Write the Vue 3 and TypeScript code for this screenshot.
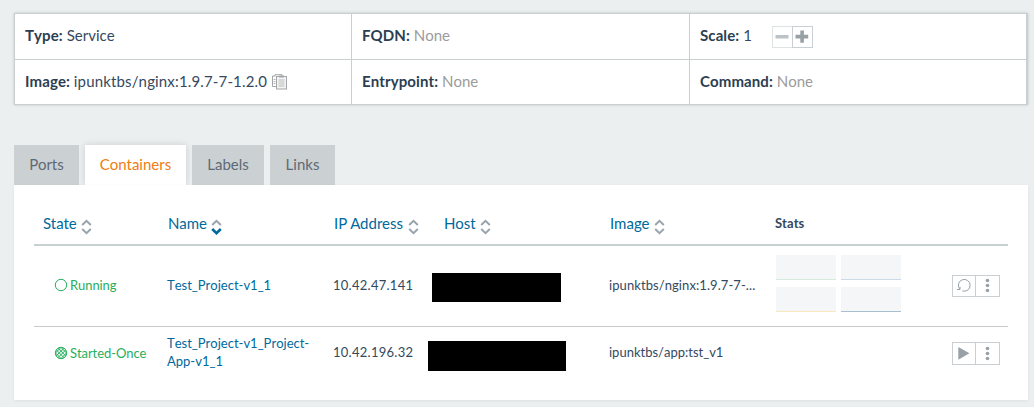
<script setup lang="ts">
interface Fact {
  label: string
  value: string
  muted?: boolean
  kind?: 'copy' | 'scale'
}

interface Column {
  key: string
  label: string
  sort?: 'none' | 'desc'
}

interface Row {
  state: string
  icon: 'running' | 'once'
  name: string
  ip: string
  image: string
  stats: string[]
}

const facts: Fact[] = [
  { label: 'Type:', value: 'Service' },
  { label: 'FQDN:', value: 'None', muted: true },
  { label: 'Scale:', value: '1', kind: 'scale' },
  { label: 'Image:', value: 'ipunktbs/nginx:1.9.7-7-1.2.0', kind: 'copy' },
  { label: 'Entrypoint:', value: 'None', muted: true },
  { label: 'Command:', value: 'None', muted: true },
]

const tabs = ['Ports', 'Containers', 'Labels', 'Links']
const activeTab = 'Containers'

const columns: Column[] = [
  { key: 'state', label: 'State', sort: 'none' },
  { key: 'name', label: 'Name', sort: 'desc' },
  { key: 'ip', label: 'IP Address', sort: 'none' },
  { key: 'host', label: 'Host', sort: 'none' },
  { key: 'image', label: 'Image', sort: 'none' },
  { key: 'stats', label: 'Stats' },
]

const rows: Row[] = [
  {
    state: 'Running',
    icon: 'running',
    name: 'Test_Project-v1_1',
    ip: '10.42.47.141',
    image: 'ipunktbs/nginx:1.9.7-7-...',
    stats: ['green', 'blue', 'yellow', 'navy'],
  },
  {
    state: 'Started-Once',
    icon: 'once',
    name: 'Test_Project-v1_Project-App-v1_1',
    ip: '10.42.196.32',
    image: 'ipunktbs/app:tst_v1',
    stats: [],
  },
]
</script>

<template>
  <main class="page">
    <section class="facts">
      <div v-for="f in facts" :key="f.label" class="fact">
        <span class="text"><b>{{ f.label }}</b> <span :class="[f.kind, { muted: f.muted }]">{{ f.value }}</span></span>
        <svg v-if="f.kind === 'copy'" class="clipboard" width="16" height="16" viewBox="0 0 16 16" fill="none" stroke="#a3a5a8">
          <path d="M4 12.500H.5v-10.500H3M3 2.500V.7h7v1.300" />
          <path d="M1.500 5.500h2M1.500 7.500h2M1.500 9.500h2" stroke-width=".8" />
          <rect x="4.500" y="2.500" width="10" height="12.500" fill="#f4f4f4" />
          <path d="M7 2.500h5" stroke-width="2" />
          <path d="M6.500 6h6M6.500 8h6M6.500 10h6M6.500 12h6" stroke-width=".7" />
        </svg>
        <span v-if="f.kind === 'scale'" class="stepper">
          <button class="minus" aria-label="Decrease"><svg width="14" height="14"><path d="M.5 5h13v3.500h-13z" /></svg></button>
          <button class="plus" aria-label="Increase"><svg width="14" height="14"><path d="M5.300 .5h3.600v4.300h4.300v3.600H8.900v4.300H5.300V8.400H.5V4.800h4.800z" /></svg></button>
        </span>
      </div>
    </section>

    <nav class="tabs">
      <a v-for="t in tabs" :key="t" class="tab" :class="[t.toLowerCase(), { active: t === activeTab }]">{{ t }}</a>
    </nav>

    <section class="panel">
      <div class="grid head">
        <div v-for="c in columns" :key="c.key" class="th" :class="c.key">
          <span>{{ c.label }}</span>
          <svg v-if="c.sort" class="sort" :class="c.sort" width="11" height="16" viewBox="0 0 11 16">
            <path d="M1.200 6 5.500 1.800 9.800 6" />
            <path class="down" d="M1.200 10 5.500 14.200 9.800 10" />
          </svg>
        </div>
      </div>

      <div v-for="r in rows" :key="r.name" class="grid row" :class="r.icon">
        <div class="status">
          <svg width="14" height="14" viewBox="0 0 14 14">
            <defs>
              <pattern id="mesh" width="2.600" height="2.600" patternUnits="userSpaceOnUse" patternTransform="rotate(45 7 7)">
                <path d="M0 .5H2.600M.5 0V2.600" stroke="#27ae60" stroke-width=".8" />
              </pattern>
            </defs>
            <circle cx="7" cy="7" r="5.700" :fill="r.icon === 'once' ? 'url(#mesh)' : 'none'" stroke="#27ae60" />
          </svg>
          <span>{{ r.state }}</span>
        </div>
        <a class="link">{{ r.name }}</a>
        <div class="address">{{ r.ip }}</div>
        <div class="host"><span class="mask"></span></div>
        <div class="source">{{ r.image }}</div>
        <div class="charts">
          <span v-for="s in r.stats" :key="s" class="chart" :class="s"></span>
        </div>
        <div class="actions">
          <button aria-label="Primary action">
            <svg v-if="r.icon === 'running'" width="16" height="16" viewBox="0 0 16 16" fill="none" stroke="#98a1a7">
              <path d="M3.800 11.200A5.900 5.900 0 1 1 6.300 12.900M1 11.500h3V8.700" />
            </svg>
            <svg v-else width="16" height="16" viewBox="0 0 16 16"><path d="M2.300 1 13.400 7.300 2.300 13.800z" fill="#98a1a7" /></svg>
          </button>
          <button aria-label="More">
            <svg width="16" height="16" viewBox="0 0 16 16" fill="#98a1a7">
              <circle cx="7.500" cy="2.500" r="1.800" /><circle cx="7.500" cy="7.500" r="1.800" /><circle cx="7.500" cy="12.500" r="1.800" />
            </svg>
          </button>
        </div>
      </div>
    </section>
  </main>
</template>

<style>
body {
  margin: 0;
  background: #ebeff0;
}
</style>

<style scoped>
* {
  box-sizing: border-box;
}
.page {
  height: 407px;
  overflow: hidden;
  padding: 13px 6px 0 14px;
  background: #ebeff0;
  color: #34495e;
  font: 15px/20px Lato, "Liberation Sans", sans-serif;
}
svg {
  display: block;
  flex: none;
}
b {
  font-weight: 700;
  letter-spacing: 0.1px;
  color: #2c3e50;
}
.facts {
  display: grid;
  grid-template-columns: 336px 337px 336px;
  grid-template-rows: 45px 44px;
  gap: 1px;
  width: 1014px;
  height: 92px;
  padding: 1px 2px 1px 1px;
  background: #c9cfd1;
  box-shadow: 0 0 3px rgba(0, 0, 0, 0.16);
  font-kerning: none;
}
.fact {
  display: flex;
  align-items: center;
  padding-left: 10px;
  background: #fff;
}
.text {
  margin-top: -3px;
}
.muted {
  color: #9b9b9b;
}
.copy {
  letter-spacing: 0.15px;
}
.clipboard {
  margin-left: 5px;
}
.stepper {
  display: flex;
  margin-left: 20px;
}
button {
  display: flex;
  align-items: center;
  justify-content: center;
  margin: 0;
  padding: 0;
  border: 1px solid #c9cfd2;
  background: #fff;
}
.stepper button {
  width: 21px;
  height: 22px;
}
.stepper .minus {
  border-color: #dfe3e4;
  border-right: 0;
  width: 20px;
}
.minus path {
  fill: #bcc2c6;
}
.plus path {
  fill: #98a1a5;
}
.tabs {
  display: flex;
  gap: 6px;
  height: 40px;
  margin-top: 40px;
}
.tab {
  display: flex;
  align-items: center;
  justify-content: center;
  padding-bottom: 2px;
  background: #cbd0d3;
  color: #5d6a73;
}
.ports,
.links {
  width: 65px;
}
.containers {
  width: 101px;
}
.labels {
  width: 72px;
}
.tab.active {
  background: #fff;
  color: #ee7d12;
  box-shadow: 0 0 7px rgba(0, 0, 0, 0.14);
}
.panel {
  position: relative;
  width: 1014px;
  height: 215px;
  padding: 19px 20px 0;
  background: #fff;
  box-shadow: 0 1px 3px rgba(0, 0, 0, 0.06);
}
.grid {
  display: grid;
  grid-template-columns: 133px 166px 95px 181px 166px 177px 1fr;
}
.head {
  height: 42px;
  border-bottom: 2px solid #c9d0d1;
}
.th {
  display: flex;
  align-items: flex-start;
  padding: 9px 0 0 1px;
  color: #00699c;
}
.th.state {
  padding-left: 9px;
}
.th.host {
  padding-left: 16px;
}
.th.stats {
  padding-left: 0;
  color: #34495e;
  font-weight: 700;
  font-size: 13px;
  letter-spacing: 0.15px;
}
.sort {
  margin: 6px 0 0 4px;
  fill: none;
  stroke: #98a3ac;
  stroke-width: 2;
}
.ip .sort,
.image .sort {
  margin-left: 5px;
}
.sort.desc .down {
  stroke: #00699c;
  stroke-width: 2.6;
}
.row {
  font-size: 13px;
  line-height: 18px;
  align-items: start;
  font-kerning: none;
}
.running {
  height: 81px;
  border-bottom: 1px solid #c9c9c9;
}
.row > div,
.link {
  margin-top: 30px;
}
.row.once > div {
  margin-top: 16px;
}
.status {
  display: flex;
  align-items: center;
  gap: 2px;
  padding-left: 20px;
  color: #27ae60;
  letter-spacing: -0.08px;
}
.row.once > .status {
  margin-top: 17px;
}
.link {
  color: #00699c;
}
.row.once > .link {
  margin-top: 7px;
}
.address {
  letter-spacing: 0.27px;
}
.running .source {
  letter-spacing: 0.08px;
}
.row .host {
  margin-top: 27px;
  padding-left: 4px;
}
.row.once .host {
  margin-top: 14px;
  padding-left: 0;
}
.mask {
  display: block;
  width: 129px;
  height: 29px;
  background: #000;
}
.once .mask {
  width: 138px;
  height: 30px;
}
.row .charts {
  display: grid;
  grid-template-columns: 60px 60px;
  gap: 7px 5px;
  margin-top: 9px;
  padding-left: 1px;
}
.chart {
  height: 25px;
  background: #f4f6f8;
  border-bottom: 1px solid;
}
.green {
  border-color: #d5eadd;
}
.blue {
  border-color: #ccd9e8;
}
.yellow {
  border-color: #f5e9bd;
}
.navy {
  border-color: #a9bfce;
}
.row .actions {
  display: flex;
  margin-top: 29px;
}
.row.once .actions {
  margin-top: 15px;
}
.actions button {
  width: 24px;
  height: 22px;
}
.once .actions button {
  height: 23px;
}
.actions button + button {
  width: 25px;
  margin-left: -1px;
}
</style>
